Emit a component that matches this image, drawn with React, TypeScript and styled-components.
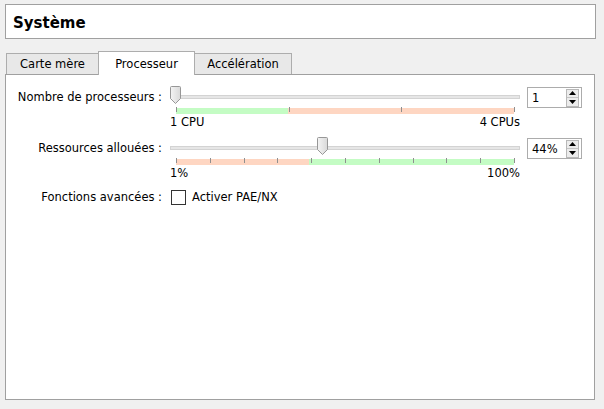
import styled, { createGlobalStyle } from "styled-components";

const GlobalStyle = createGlobalStyle`
  html, body {
    margin: 0;
    background: #f0f0f0;
  }
  body {
    font-family: "DejaVu Sans", "Liberation Sans", sans-serif;
    font-size: 11.5px;
    color: #000;
  }
`;

const Page = styled.div`
  box-sizing: border-box;
  width: 604px;
  height: 409px;
  padding: 4px 8px 0 5px;
`;

const Header = styled.div`
  height: 31px;
  border: 1px solid #a0a0a0;
  background: #fff;
  padding: 2px 0 0 7px;
`;

const Title = styled.h1`
  margin: 0;
  font-family: "DejaVu Sans", sans-serif;
  font-size: 15px;
  font-weight: bold;
  line-height: 33px;
`;

const TabBar = styled.div`
  display: flex;
  align-items: flex-end;
  margin: 12px 0 -1px 1px;
  position: relative;
  z-index: 1;
`;

const Tab = styled.div<{ $active?: boolean; $width: number }>`
  box-sizing: border-box;
  width: ${(p) => p.$width}px;
  height: ${(p) => (p.$active ? 24 : 21)}px;
  margin-bottom: ${(p) => (p.$active ? 0 : 1)}px;
  border: 1px solid #adadad;
  border-bottom: none;
  background: ${(p) => (p.$active ? "#fff" : "#e8e8e8")};
  display: flex;
  align-items: center;
  justify-content: center;
  position: relative;
  z-index: ${(p) => (p.$active ? 2 : 1)};
  & + & {
    margin-left: -1px;
  }
`;

const Panel = styled.div`
  box-sizing: border-box;
  height: 326px;
  margin-right: 1px;
  border: 1px solid #a0a0a0;
  background: #fff;
`;

const Form = styled.div`
  display: grid;
  grid-template-columns: 150px 350px 55px;
  column-gap: 8px;
  row-gap: 8px;
  padding: 11px 0 0 6px;
`;

const Label = styled.div<{ $line?: number }>`
  align-self: start;
  text-align: right;
  white-space: nowrap;
  line-height: ${(p) => p.$line ?? 21}px;
  margin-top: ${(p) => (p.$line ? 2 : 1)}px;
`;

const SliderBox = styled.div`
  display: flex;
  flex-direction: column;
`;

const TrackArea = styled.div`
  position: relative;
  height: 18px;
`;

const Track = styled.div`
  margin-top: 9px;
  height: 2px;
  border: 1px solid #d3d3d3;
  background: #e6e6e6;
`;

const HandleWrap = styled.div`
  position: absolute;
  top: 0;
  width: 11px;
  height: 18px;
  svg {
    display: block;
  }
`;

const Ticks = styled.svg`
  display: block;
  margin: 3px 5px 0 6px;
`;

const Legend = styled.div`
  display: flex;
  justify-content: space-between;
  line-height: 14px;
  margin-top: 1px;
`;

const Spin = styled.div`
  box-sizing: border-box;
  align-self: start;
  width: 55px;
  height: 21px;
  margin: 1px 0 0 -1px;
  border: 1px solid #acacac;
  background: #fff;
  display: flex;
  align-items: center;
`;

const SpinValue = styled.span`
  flex: 1;
  padding-left: 4px;
`;

const SpinButtons = styled.div`
  box-sizing: border-box;
  width: 13px;
  height: 18px;
  margin-right: 2px;
  border: 1px solid #b8b8b8;
  display: flex;
  flex-direction: column;
`;

const SpinButton = styled.div<{ $down?: boolean }>`
  flex: 1;
  background: #ececec;
  display: flex;
  align-items: center;
  justify-content: center;
  border-top: ${(p) => (p.$down ? "1px solid #c4c4c4" : "none")};
  svg {
    display: block;
  }
`;

const CheckRow = styled.label`
  grid-column: 2 / 4;
  display: flex;
  align-items: center;
  gap: 6px;
  margin-top: 2px;
  line-height: 15px;
`;

const Box = styled.span`
  box-sizing: border-box;
  width: 15px;
  height: 15px;
  border: 1px solid #333;
  background: #fff;
  margin-left: 1px;
`;

function Handle() {
  return (
    <svg width="11" height="18" viewBox="0 0 11 18">
      <defs>
        <linearGradient id="hg" x1="0" x2="1" y1="0" y2="0">
          <stop offset="0" stopColor="#f4f4f4" />
          <stop offset="1" stopColor="#d9d9d9" />
        </linearGradient>
      </defs>
      <path
        d="M0.5 1.5 Q0.5 0.5 1.5 0.5 H9.5 Q10.5 0.5 10.5 1.5 V12.5 L5.5 17.5 L0.5 12.5 Z"
        fill="url(#hg)"
        stroke="#979797"
      />
    </svg>
  );
}

type Band = { from: number; to: number; color: string };

function TickScale({ count, bands }: { count: number; bands: Band[] }) {
  const w = 338;
  const xs = Array.from({ length: count }, (_, i) => Math.round((i * w) / (count - 1)) + 0.5);
  return (
    <Ticks width={w + 1} height={7}>
      {bands.map((b, i) => (
        <rect key={i} x={b.from} y={1} width={b.to - b.from} height={6} fill={b.color} />
      ))}
      {xs.map((x) => (
        <line key={x} x1={x} x2={x} y1={0} y2={5} stroke="#8f8f8f" />
      ))}
    </Ticks>
  );
}

function Slider({
  fraction,
  count,
  bands,
  min,
  max,
}: {
  fraction: number;
  count: number;
  bands: Band[];
  min: string;
  max: string;
}) {
  return (
    <SliderBox>
      <TrackArea>
        <Track />
        <HandleWrap style={{ left: Math.round(fraction * 339) }}>
          <Handle />
        </HandleWrap>
      </TrackArea>
      <TickScale count={count} bands={bands} />
      <Legend>
        <span>{min}</span>
        <span>{max}</span>
      </Legend>
    </SliderBox>
  );
}

function SpinBox({ value }: { value: string }) {
  return (
    <Spin>
      <SpinValue>{value}</SpinValue>
      <SpinButtons>
        <SpinButton>
          <svg width="7" height="4" viewBox="0 0 7 4">
            <path d="M3.5 0 L7 4 H0 Z" fill="#000" />
          </svg>
        </SpinButton>
        <SpinButton $down>
          <svg width="7" height="4" viewBox="0 0 7 4">
            <path d="M0 0 H7 L3.5 4 Z" fill="#000" />
          </svg>
        </SpinButton>
      </SpinButtons>
    </Spin>
  );
}

const GREEN = "#c4fcc4";
const SALMON = "#fed6c2";

export default function App() {
  return (
    <>
      <GlobalStyle />
      <Page>
        <Header>
          <Title>Système</Title>
        </Header>
        <TabBar>
          <Tab $width={93}>Carte mère</Tab>
          <Tab $width={97} $active>
            Processeur
          </Tab>
          <Tab $width={98}>Accélération</Tab>
        </TabBar>
        <Panel>
          <Form>
            <Label>Nombre de processeurs :</Label>
            <Slider
              fraction={0}
              count={4}
              bands={[
                { from: 0, to: 112, color: GREEN },
                { from: 112, to: 338, color: SALMON },
              ]}
              min="1 CPU"
              max="4 CPUs"
            />
            <SpinBox value="1" />

            <Label>Ressources allouées :</Label>
            <Slider
              fraction={43 / 99}
              count={11}
              bands={[
                { from: 0, to: 133, color: SALMON },
                { from: 133, to: 338, color: GREEN },
              ]}
              min="1%"
              max="100%"
            />
            <SpinBox value="44%" />

            <Label $line={15}>Fonctions avancées :</Label>
            <CheckRow>
              <Box />
              Activer PAE/NX
            </CheckRow>
          </Form>
        </Panel>
      </Page>
    </>
  );
}
